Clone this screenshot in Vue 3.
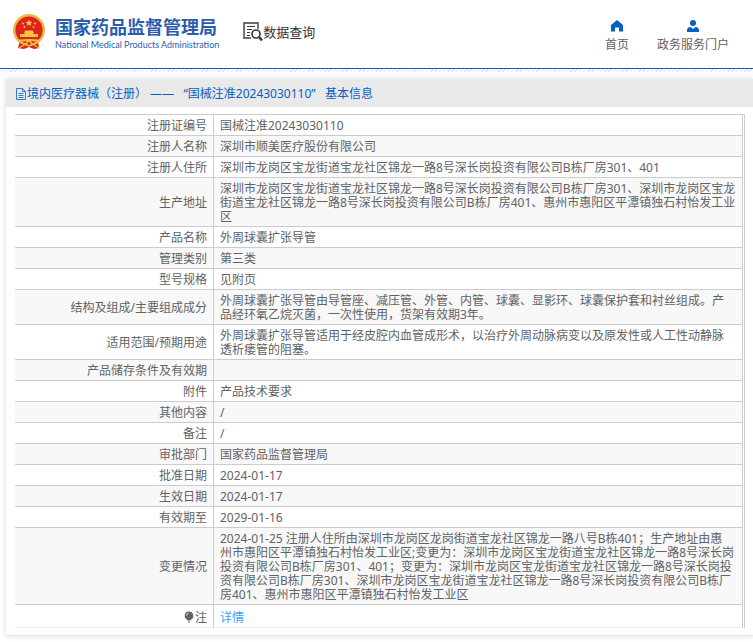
<template>
  <div class="page">
    <header class="header">
      <a class="brand" href="#">
        <svg class="emblem" viewBox="0 0 34 36" aria-hidden="true">
          <path d="M8 27 L26 27 L27 34 L22 35 L17 33 L12 35 L6 34 Z" fill="#d8231c" />
          <circle cx="17" cy="16" r="16" fill="#e9b83f" />
          <circle cx="17" cy="16" r="13.6" fill="#df251b" />
          <path d="M17 5.5 L17.9 7.8 L20.4 7.9 L18.5 9.5 L19.1 12 L17 10.6 L14.9 12 L15.5 9.5 L13.6 7.9 L16.1 7.8 Z" fill="#f6d24b" />
          <circle cx="11" cy="9.5" r="0.9" fill="#f6d24b" />
          <circle cx="23" cy="9.5" r="0.9" fill="#f6d24b" />
          <circle cx="12.5" cy="13" r="0.9" fill="#f6d24b" />
          <circle cx="21.5" cy="13" r="0.9" fill="#f6d24b" />
          <path d="M12 18 L13.5 16.5 H20.5 L22 18 L21 20 H26 V23 H8 V20 H13 Z" fill="#f3c546" />
          <path d="M5 26 Q17 24 29 26 L27 28 Q17 26 7 28 Z" fill="#f0bd3e" />
          <circle cx="17" cy="29.5" r="3" fill="#f0bd3e" />
          <circle cx="17" cy="29.5" r="1.6" fill="#d8231c" />
          <path d="M7 34 L12 31 M27 34 L22 31" stroke="#f0bd3e" stroke-width="1.2" />
        </svg>
        <span class="brand-text">
          <span class="brand-cn">国家药品监督管理局</span>
          <span class="brand-en">National Medical Products Administration</span>
        </span>
      </a>
      <a class="query" href="#">
        <svg class="query-icon" viewBox="0 0 20 20" fill="none" stroke="#343c4a" aria-hidden="true">
          <path d="M15 7 V1 H1 V16 H8" stroke-width="1.4" />
          <path d="M4 4.5 H12 M4 7.5 H9 M4 10.5 H7 M4 13.5 H7" stroke-width="1.2" />
          <circle cx="13" cy="12" r="4" stroke-width="1.7" />
          <path d="M16 15 L19 18.5" stroke-width="2.6" />
        </svg>
        <span>数据查询</span>
      </a>
      <nav class="nav">
        <a href="#">
          <svg viewBox="0 0 12 12" aria-hidden="true">
            <path d="M6 0 L12 5 V11.5 H8 V7.5 H4 V11.5 H0 V5 Z" fill="#0560c4" />
          </svg>
          <span>首页</span>
        </a>
        <a href="#">
          <svg viewBox="0 0 12 12" aria-hidden="true">
            <circle cx="6" cy="3" r="3" fill="#0560c4" />
            <path d="M0 12 V10 Q0.5 7.2 3.5 7 L6 9 L8.5 7 Q11.5 7.2 12 10 V12 Z" fill="#0560c4" />
          </svg>
          <span>政务服务门户</span>
        </a>
      </nav>
    </header>
    <div class="stripe"></div>

    <main class="panel">
      <h1 class="panel-title">
        <svg viewBox="0 0 10 12" fill="none" stroke="#0560c4" aria-hidden="true">
          <path d="M0.5 0.5 H6.5 L9.5 3.5 V11.5 H0.5 Z M6.5 0.5 V3.5 H9.5 M2.5 5.5 H7.5 M2.5 7.5 H7.5 M2.5 9.5 H7.5" stroke-width="0.8" />
        </svg>
        <span>境内医疗器械（注册） ——&nbsp;&nbsp; “国械注准20243030110”&nbsp;&nbsp; 基本信息</span>
      </h1>
      <table class="info">
        <tbody>
          <tr v-for="row in rows" :key="row.label">
            <th scope="row">{{ row.label }}</th>
            <td>{{ row.value }}</td>
          </tr>
          <tr class="note">
            <th scope="row">
              <svg viewBox="0 0 10 12" aria-hidden="true">
                <path d="M5 0.5 A4.3 4.3 0 0 1 7 8.6 L6.5 9.5 H3.5 L3 8.6 A4.3 4.3 0 0 1 5 0.5 Z M4 10.5 H6 V11.5 H4 Z" fill="#606266" />
                <path d="M2.3 4.6 Q2.6 2.6 4.6 2.3" fill="none" stroke="#fff" stroke-width="0.8" />
              </svg>注
            </th>
            <td><a href="#">详情</a></td>
          </tr>
        </tbody>
      </table>
    </main>
  </div>
</template>

<script setup>
const rows = [
  { label: '注册证编号', value: '国械注准20243030110' },
  { label: '注册人名称', value: '深圳市顺美医疗股份有限公司' },
  { label: '注册人住所', value: '深圳市龙岗区宝龙街道宝龙社区锦龙一路8号深长岗投资有限公司B栋厂房301、401' },
  {
    label: '生产地址',
    value: '深圳市龙岗区宝龙街道宝龙社区锦龙一路8号深长岗投资有限公司B栋厂房301、深圳市龙岗区宝龙街道宝龙社区锦龙一路8号深长岗投资有限公司B栋厂房401、惠州市惠阳区平潭镇独石村怡发工业区',
  },
  { label: '产品名称', value: '外周球囊扩张导管' },
  { label: '管理类别', value: '第三类' },
  { label: '型号规格', value: '见附页' },
  {
    label: '结构及组成/主要组成成分',
    value: '外周球囊扩张导管由导管座、减压管、外管、内管、球囊、显影环、球囊保护套和衬丝组成。产\n品经环氧乙烷灭菌，一次性使用，货架有效期3年。',
  },
  {
    label: '适用范围/预期用途',
    value: '外周球囊扩张导管适用于经皮腔内血管成形术，以治疗外周动脉病变以及原发性或人工性动静脉\n透析瘘管的阻塞。',
  },
  { label: '产品储存条件及有效期', value: '' },
  { label: '附件', value: '产品技术要求' },
  { label: '其他内容', value: '/' },
  { label: '备注', value: '/' },
  { label: '审批部门', value: '国家药品监督管理局' },
  { label: '批准日期', value: '2024-01-17' },
  { label: '生效日期', value: '2024-01-17' },
  { label: '有效期至', value: '2029-01-16' },
  {
    label: '变更情况',
    value: '2024-01-25 注册人住所由深圳市龙岗区龙岗街道宝龙社区锦龙一路八号B栋401；生产地址由惠\n州市惠阳区平潭镇独石村怡发工业区;变更为：深圳市龙岗区宝龙街道宝龙社区锦龙一路8号深长岗\n投资有限公司B栋厂房301、401；变更为：深圳市龙岗区宝龙街道宝龙社区锦龙一路8号深长岗投\n资有限公司B栋厂房301、深圳市龙岗区宝龙街道宝龙社区锦龙一路8号深长岗投资有限公司B栋厂\n房401、惠州市惠阳区平潭镇独石村怡发工业区',
  },
]
</script>

<style>
body {
  background: #fff;
}
</style>

<style scoped>
.page {
  font-family: "Noto Sans", "Noto Sans CJK SC", sans-serif;
  font-size: 12px;
  line-height: 14px;
  color: #606266;
  padding-bottom: 6px;
  overflow: hidden;
}

a {
  color: inherit;
  text-decoration: none;
}

.header {
  display: flex;
  align-items: center;
  box-sizing: border-box;
  height: 69px;
  padding: 0 24px 4px 12px;
  border-bottom: 1px solid #0560c4;
}

.brand {
  display: flex;
  align-items: center;
  gap: 9px;
}

.emblem {
  width: 34px;
  height: 36px;
}

.brand-text {
  display: flex;
  flex-direction: column;
  padding-top: 2px;
  color: #2c5cab;
  white-space: nowrap;
}

.brand-cn {
  font-size: 18px;
  font-weight: 700;
  line-height: 22px;
}

.brand-en {
  font-family: Lato, sans-serif;
  font-size: 9px;
  line-height: 13px;
}

.query {
  display: flex;
  align-items: center;
  margin-left: 24px;
  font-size: 13px;
  color: #333;
}

.query-icon {
  width: 20px;
  height: 20px;
}

.nav {
  display: flex;
  gap: 28px;
  margin-left: auto;
  padding-top: 8px;
}

.nav a {
  display: flex;
  flex-direction: column;
  align-items: center;
  gap: 6px;
}

.nav svg {
  width: 12px;
  height: 12px;
}

.stripe {
  height: 3px;
  background: repeating-linear-gradient(135deg, #e4e4e4 0 1px, #fff 1px 3px);
}

.panel {
  margin: 7px 0 0 6px;
  padding-bottom: 7px;
  border-bottom: 1px solid #e6e6e6;
  box-shadow: 0 0 6px rgba(0, 0, 0, 0.15);
}

.panel-title {
  display: flex;
  align-items: center;
  gap: 1px;
  box-sizing: border-box;
  height: 28px;
  margin: 0 0 7px;
  padding: 2px 0 0 10px;
  background: #e9e9e9;
  font-size: 12px;
  font-weight: 400;
  color: #0560c4;
}

.panel-title svg {
  width: 10px;
  height: 12px;
}

.info {
  width: calc(100% - 17px);
  margin-left: 9px;
  border-collapse: separate;
  border-spacing: 0;
  border-top: 1px solid #ccc;
  border-right: 1px solid #ccc;
  padding-right: 1px;
  table-layout: fixed;
}

.info th,
.info td {
  padding: 4px 5px 2px 6px;
  border-right: 1px solid #ccc;
  border-bottom: 1px solid #ccc;
  height: 14px;
  vertical-align: middle;
  font-weight: 400;
}

.info th {
  width: 186px;
  padding-right: 6px;
  text-align: right;
}

.info td {
  text-align: left;
  white-space: pre-line;
}

.info tr:nth-child(even) {
  background: #f8f8f8;
}

.info .note th,
.info .note td {
  height: 14px;
  padding-top: 6px;
  border-bottom-color: #ebeef5;
}

.note svg {
  width: 10px;
  height: 12px;
  margin-right: 1px;
  vertical-align: -1px;
}

.note a {
  color: #409eff;
}

.info .note {
  background: #fff;
}
</style>
